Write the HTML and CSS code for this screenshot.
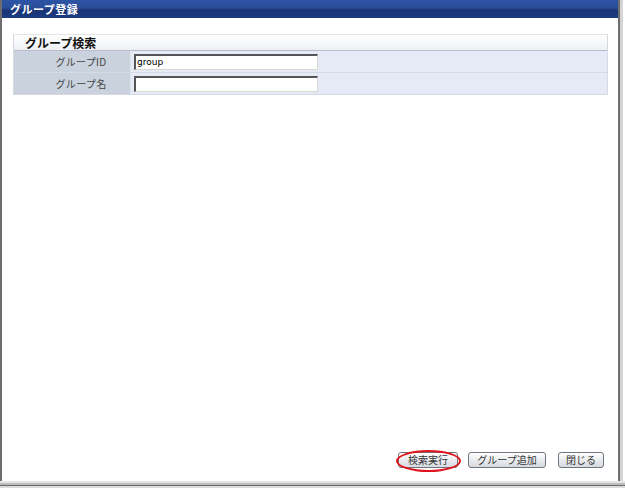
FILE: index.html
```html
<!DOCTYPE html>
<html lang="ja">
<head>
<meta charset="utf-8">
<link rel="stylesheet" href="styles.css">
</head>
<body>
<div class="frame">
  <div class="window">
    <div class="titlebar">グループ登録</div>
    <div class="content">
      <div class="panel">
        <div class="panel-head">グループ検索</div>
        <div class="row">
          <div class="label">グループID</div>
          <div class="value"><div class="input">group</div></div>
        </div>
        <div class="row">
          <div class="label">グループ名</div>
          <div class="value"><div class="input"></div></div>
        </div>
      </div>
      <div class="spacer"></div>
      <div class="buttons">
        <div class="btn-wrap">
          <span class="btn btn-search">検索実行</span>
          <span class="ring"></span>
        </div>
        <span class="btn btn-add">グループ追加</span>
        <span class="btn btn-close">閉じる</span>
      </div>
    </div>
  </div>
  <div class="bottom-edge"></div>
</div>
</body>
</html>
```

FILE: styles.css
```css
* { box-sizing: border-box; }
html, body { margin: 0; padding: 0; background: #fff; }
body {
  width: 625px;
  height: 488px;
  font-family: "Noto Sans CJK JP", "DejaVu Sans", sans-serif;
  overflow: hidden;
}
.frame {
  width: 625px;
  height: 488px;
  display: flex;
  flex-direction: column;
}
.window {
  flex: 1;
  display: flex;
  flex-direction: column;
  border-left: 2px solid #6e6e6e;
  border-right: 2px solid #6e6e6e;
  margin-right: 5px;
  box-shadow: 3px 0 0 #d4d4d4;
}
.titlebar {
  height: 18px;
  background: linear-gradient(#2d55a6 0%, #2a4d98 45%, #1a3575 55%, #1c3a80 100%);
  color: #fff;
  font-size: 11px;
  font-weight: bold;
  line-height: 18px;
  padding-left: 8px;
  letter-spacing: 0.5px;
}
.content {
  flex: 1;
  display: flex;
  flex-direction: column;
  padding: 16px 10px 8px 11px;
}
.panel {
  border: 1px solid #d6d9e0;
  border-top-color: #e4e4e4;
}
.panel-head {
  height: 16px;
  background: linear-gradient(#ffffff, #eef0f4);
  border-bottom: 1px solid #b5bccb;
  font-size: 12px;
  font-weight: bold;
  line-height: 15px;
  padding-left: 11px;
  color: #111;
}
.row {
  display: flex;
  height: 22px;
  border-bottom: 1px solid #d6d9e6;
}
.row:last-child { border-bottom: none; height: 21px; }
.label {
  width: 117px;
  background: #c9d2dd;
  color: #444;
  font-size: 10px;
  line-height: 21px;
  text-align: center;
  padding-left: 18px;
  letter-spacing: 0.3px;
  border-right: 1px solid #dfe3ea;
}
.value {
  flex: 1;
  background: #e6e9f6;
  padding: 3px 0 0 3px;
}
.input {
  width: 184px;
  height: 16px;
  background: #fff;
  border-top: 2px solid #555;
  border-left: 2px solid #555;
  border-right: 1px solid #d8d8d0;
  border-bottom: 1px solid #d8d8d0;
  font-family: "DejaVu Sans", sans-serif;
  font-size: 9px;
  line-height: 13px;
  padding-left: 1px;
  color: #000;
}
.spacer { flex: 1; }
.buttons {
  display: flex;
  justify-content: flex-end;
  align-items: center;
  gap: 10px;
  padding-right: 4px;
  margin-bottom: 5px;
}
.btn-wrap { position: relative; display: flex; }
.btn {
  display: inline-block;
  height: 16px;
  border: 1px solid #6e7680;
  border-radius: 3px;
  background: linear-gradient(#ffffff, #e6e8ec 60%, #d6d9de);
  font-size: 10px;
  line-height: 14px;
  color: #333;
  text-align: center;
}
.btn-search { width: 60px; }
.btn-add { width: 78px; }
.btn-close { width: 46px; margin-left: 2px; }
.ring {
  position: absolute;
  left: -2px;
  top: -2px;
  width: 65px;
  height: 22px;
  border: 2px solid #e0141c;
  border-radius: 50%;
}
.bottom-edge {
  height: 7px;
  background: linear-gradient(#e4e4e4 0, #e4e4e4 2px, #bdbdbd 2px, #bdbdbd 4px, #6a6a6a 4px, #6a6a6a 5px, #dcdcdc 5px);
}
```
